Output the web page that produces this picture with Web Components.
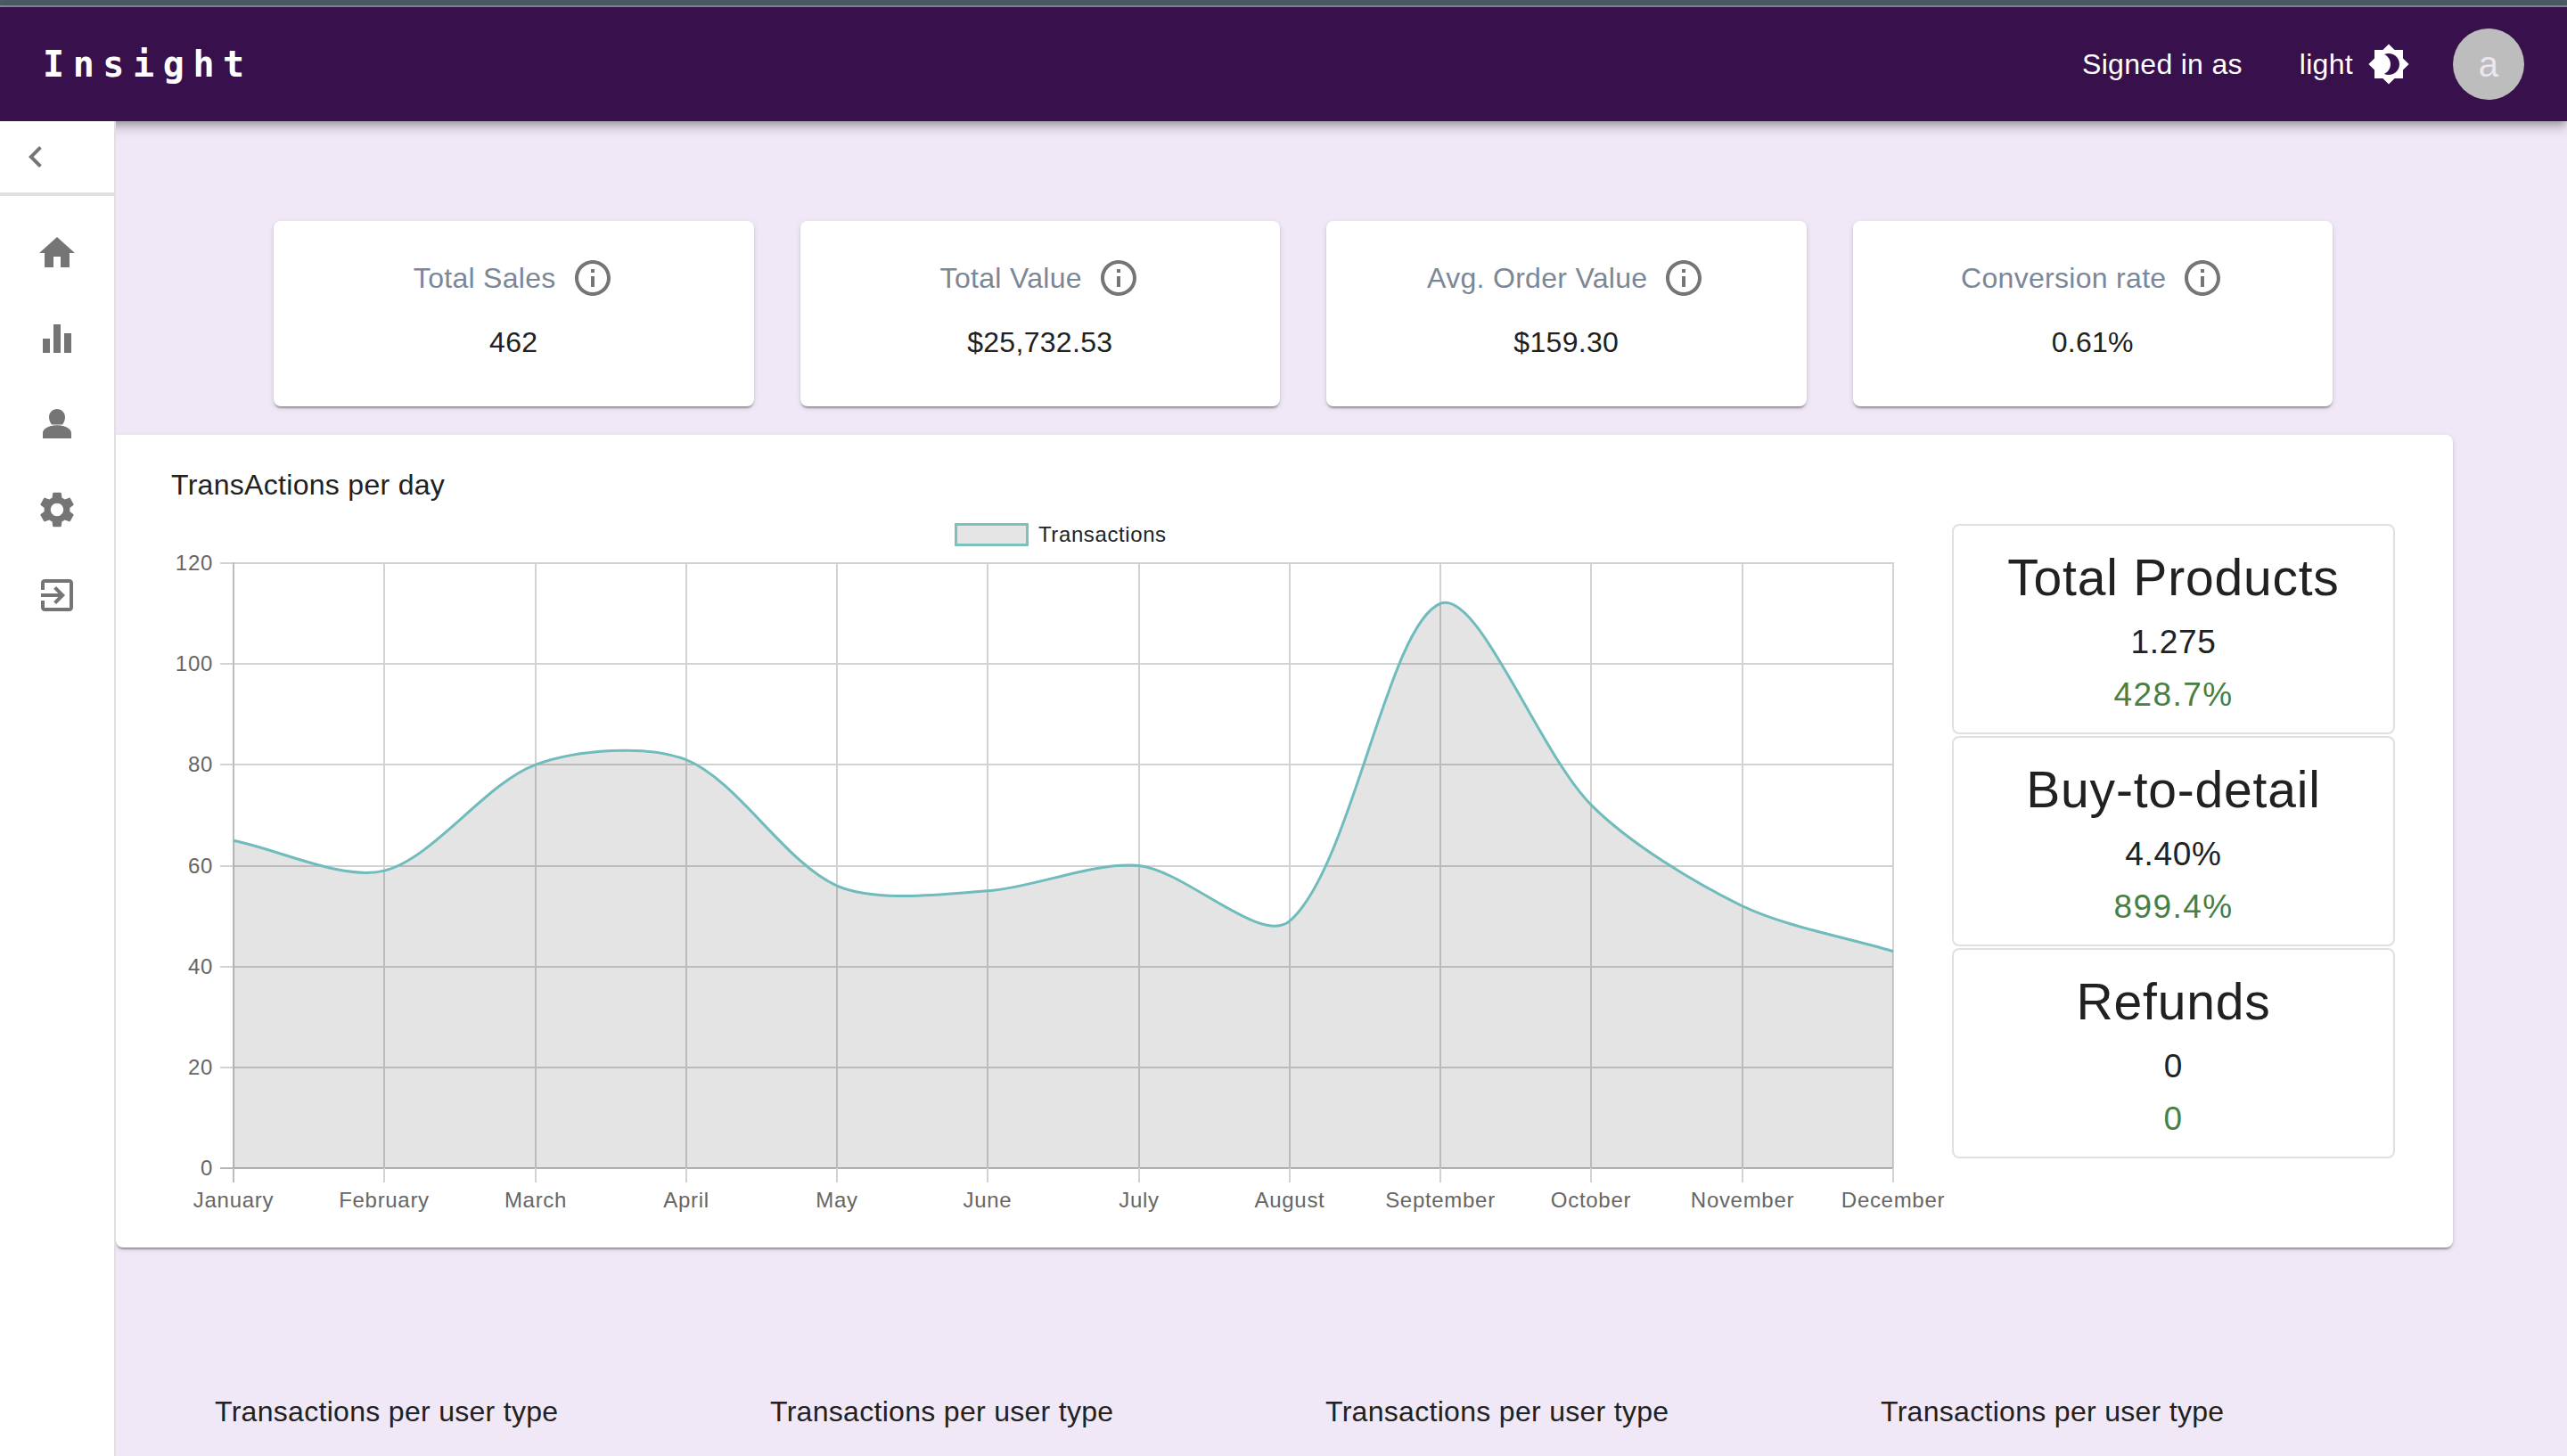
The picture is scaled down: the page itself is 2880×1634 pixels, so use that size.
<!DOCTYPE html>
<html lang="en">
<head>
<meta charset="utf-8">
<title>Insight</title>
<style>
html,body{margin:0;padding:0;height:100%;overflow:hidden;background:#f0e8f6;font-family:"Liberation Sans",Arial,sans-serif;color:#212121}
</style>
</head>
<body>
<app-shell>
  <app-bar slot="bar" brand="Insight" user="Signed in as" mode="light" initial="a"></app-bar>
  <side-nav slot="nav"></side-nav>
  <kpi-row>
    <kpi-card label="Total Sales" value="462"></kpi-card>
    <kpi-card label="Total Value" value="$25,732.53"></kpi-card>
    <kpi-card label="Avg. Order Value" value="$159.30"></kpi-card>
    <kpi-card label="Conversion rate" value="0.61%"></kpi-card>
  </kpi-row>
  <chart-panel heading="TransActions per day">
    <line-chart slot="chart"></line-chart>
    <stat-card slot="stats" label="Total Products" value="1.275" delta="428.7%"></stat-card>
    <stat-card slot="stats" label="Buy-to-detail" value="4.40%" delta="899.4%"></stat-card>
    <stat-card slot="stats" label="Refunds" value="0" delta="0"></stat-card>
  </chart-panel>
  <title-row>
    <span>Transactions per user type</span>
    <span>Transactions per user type</span>
    <span>Transactions per user type</span>
    <span>Transactions per user type</span>
  </title-row>
</app-shell>
<script>
const ICONS={
  chevron:'M15.41 7.41 14 6l-6 6 6 6 1.41-1.41L10.83 12z',
  home:'M10 20v-6h4v6h5v-8h3L12 3 2 12h3v8z',
  bars:'M4 12h4v8H4zM10 4h4v16h-4zM16 9h4v11h-4z',
  person:'M12 3.5c-2.5 0-4.5 2-4.5 4.5 0 1.5.5 3 1.5 4.2h6c1-1.2 1.5-2.7 1.5-4.2 0-2.5-2-4.5-4.5-4.5zM12 12.6c-3 0-8 1.2-8 4.4v3h16v-3c0-3.2-5-4.4-8-4.4z',
  gear:'M19.14 12.94c.04-.3.06-.61.06-.94 0-.32-.02-.64-.07-.94l2.03-1.58c.18-.14.23-.41.12-.61l-1.92-3.32c-.12-.22-.37-.29-.59-.22l-2.39.96c-.5-.38-1.03-.7-1.62-.94l-.36-2.54c-.04-.24-.24-.41-.48-.41h-3.84c-.24 0-.43.17-.47.41l-.36 2.54c-.59.24-1.13.57-1.62.94l-2.39-.96c-.22-.08-.47 0-.59.22L2.74 8.87c-.12.21-.08.47.12.61l2.03 1.58c-.05.3-.09.63-.09.94s.02.64.07.94l-2.03 1.58c-.18.14-.23.41-.12.61l1.92 3.32c.12.22.37.29.59.22l2.39-.96c.5.38 1.03.7 1.62.94l.36 2.54c.05.24.24.41.48.41h3.84c.24 0 .44-.17.47-.41l.36-2.54c.59-.24 1.13-.56 1.62-.94l2.39.96c.22.08.47 0 .59-.22l1.92-3.32c.12-.22.07-.47-.12-.61l-2.01-1.58zM12 15.6c-1.98 0-3.6-1.62-3.6-3.6s1.62-3.6 3.6-3.6 3.6 1.62 3.6 3.6-1.62 3.6-3.6 3.6z',
  exit:'M10.09 15.59 11.5 17l5-5-5-5-1.41 1.41L12.67 11H3v2h9.67l-2.58 2.59zM19 3H5c-1.11 0-2 .9-2 2v4h2V5h14v14H5v-4H3v4c0 1.1.89 2 2 2h14c1.1 0 2-.9 2-2V5c0-1.1-.9-2-2-2z',
  info:'M11 7h2v2h-2zm0 4h2v6h-2zm1-9C6.48 2 2 6.48 2 12s4.48 10 10 10 10-4.48 10-10S17.52 2 12 2zm0 18c-4.41 0-8-3.59-8-8s3.59-8 8-8 8 3.59 8 8-3.59 8-8 8z',
  theme:'M20 8.69V4h-4.69L12 .69 8.69 4H4v4.69L.69 12 4 15.31V20h4.69L12 23.31 15.31 20H20v-4.69L23.31 12 20 8.69zM12 18c-.89 0-1.74-.2-2.5-.55C11.56 16.5 13 14.42 13 12s-1.44-4.5-3.5-5.45C10.26 6.2 11.11 6 12 6c3.31 0 6 2.69 6 6s-2.69 6-6 6z'
};
const icon=(n,fill)=>`<svg width="48" height="48" viewBox="0 0 24 24" fill="${fill}" style="display:block;flex:none" aria-hidden="true"><path fill-rule="evenodd" d="${ICONS[n]}"/></svg>`;
function def(name,render){
  customElements.define(name,class extends HTMLElement{
    connectedCallback(){
      if(this.shadowRoot)return;
      this.attachShadow({mode:'open'}).innerHTML=render(this);
    }
  });
}
def('app-shell',()=>`<style>
:host{display:grid;grid-template-columns:130px 1fr;grid-template-rows:8px 128px 1fr;height:1634px;overflow:hidden}
.strip{grid-column:1/3;background:#4b5b64;border-bottom:2px solid #7f8b91;box-sizing:border-box}
.bar{grid-column:1/3;display:block;position:relative;z-index:1}
.nav{display:block;position:relative;z-index:2}
main{display:block;min-width:0;background:#f0e8f6}
</style>
<div class="strip"></div>
<div class="bar"><slot name="bar"></slot></div>
<div class="nav"><slot name="nav"></slot></div>
<main><slot></slot></main>`);
def('app-bar',h=>`<style>
:host{display:flex;align-items:center;height:128px;padding:0 48px;box-sizing:border-box;background:#38104b;color:#fff;
box-shadow:0 4px 8px -2px rgba(0,0,0,.2),0 8px 10px 0 rgba(0,0,0,.14),0 2px 20px 0 rgba(0,0,0,.12);font:32px/48px "Liberation Sans",Arial,sans-serif;letter-spacing:.3px}
.brand{font:700 40px/48px "DejaVu Sans Mono",monospace;letter-spacing:9.6px;margin-right:auto}
.mode{margin-left:64px;margin-right:16px}
.avatar{width:80px;height:80px;margin-left:48px;border-radius:50%;background:#bdbdbd;color:#ece6ee;font-size:40px;line-height:80px;text-align:center}
</style>
<span class="brand">${h.getAttribute('brand')}</span>
<span>${h.getAttribute('user')}</span>
<span class="mode">${h.getAttribute('mode')}</span>
${icon('theme','#fff')}
<span class="avatar">${h.getAttribute('initial')}</span>`);
def('side-nav',()=>`<style>
:host{display:block;height:100%;box-sizing:border-box;background:#fff;border-right:2px solid #e0e0e0}
.top{display:flex;align-items:center;height:80px;padding-left:16px;border-bottom:4px solid #e0e0e0}
ul{list-style:none;margin:0;padding:40px 0 0;display:grid;gap:48px;justify-items:center}
li{display:block;height:48px}
</style>
<div class="top">${icon('chevron','#757575')}</div>
<ul>
<li>${icon('home','#757575')}</li>
<li>${icon('bars','#757575')}</li>
<li>${icon('person','#757575')}</li>
<li>${icon('gear','#757575')}</li>
<li>${icon('exit','#757575')}</li>
</ul>`);
def('kpi-row',()=>`<style>
:host{display:grid;grid-template-columns:repeat(4,1fr);gap:52px;width:2310px;margin:112px 0 0 177px}
</style><slot></slot>`);
def('kpi-card',h=>`<style>
:host{display:block;height:208px;padding-top:40px;box-sizing:border-box;background:#fff;border-radius:8px;text-align:center;
box-shadow:0 4px 2px -2px rgba(0,0,0,.2),0 2px 2px 0 rgba(0,0,0,.14),0 2px 6px 0 rgba(0,0,0,.12);font:32px/48px "Liberation Sans",Arial,sans-serif;letter-spacing:.3px}
.head{display:flex;justify-content:center;gap:17px;color:#7b8797;letter-spacing:.3px}
.val{margin-top:24px;color:#212121}
</style>
<div class="head"><span>${h.getAttribute('label')}</span>${icon('info','#757575')}</div>
<div class="val">${h.getAttribute('value')}</div>`);
def('chart-panel',h=>`<style>
:host{display:block;width:2622px;height:912px;margin-top:32px;padding:32px 0 0 62px;box-sizing:border-box;background:#fff;border-radius:0 8px 8px 8px;
box-shadow:0 4px 2px -2px rgba(0,0,0,.2),0 2px 2px 0 rgba(0,0,0,.14),0 2px 6px 0 rgba(0,0,0,.12);font:32px/48px "Liberation Sans",Arial,sans-serif}
h2{margin:0 0 4px;font:inherit;letter-spacing:.3px;color:#212121}
.row{display:flex;align-items:flex-start}
.stats{display:grid;gap:2px;width:497px;margin-top:16px}
</style>
<h2>${h.getAttribute('heading')}</h2>
<div class="row"><slot name="chart"></slot><div class="stats"><slot name="stats"></slot></div></div>`);
def('stat-card',h=>`<style>
:host{display:block;height:236px;box-sizing:border-box;border:2px solid #e0e0e0;border-radius:8px;background:#fff;text-align:center;padding-top:25px;font-family:"Liberation Sans",Arial,sans-serif}
.t{font-size:57px;line-height:67px;letter-spacing:.8px;color:#212121}
.v{font-size:37px;line-height:58px;letter-spacing:.7px;margin-top:10px;color:#212121}
.d{font-size:37px;line-height:58px;letter-spacing:1.4px;margin-top:1px;color:#477f45}
</style>
<div class="t">${h.getAttribute('label')}</div>
<div class="v">${h.getAttribute('value')}</div>
<div class="d">${h.getAttribute('delta')}</div>`);
def('line-chart',()=>{
  const ox=192,oy=572,L=262,R=2124,T=632,B=1311;
  const vals=[65,59,80,81,56,55,60,49,112,72,52,43];
  const months=['January','February','March','April','May','June','July','August','September','October','November','December'];
  const X=i=>L+(R-L)*i/11, Y=v=>B-(B-T)*v/120;
  const pts=vals.map((v,i)=>[X(i),Y(v)]);
  const t=.3;
  const ctrl=pts.map((p,i)=>{
    const a=pts[Math.max(i-1,0)],b=pts[Math.min(i+1,pts.length-1)];
    const d1=Math.hypot(p[0]-a[0],p[1]-a[1]),d2=Math.hypot(b[0]-p[0],b[1]-p[1]);
    const s=d1+d2||1,fa=t*d1/s,fb=t*d2/s;
    return {p:[p[0]-fa*(b[0]-a[0]),p[1]-fa*(b[1]-a[1])],n:[p[0]+fb*(b[0]-a[0]),p[1]+fb*(b[1]-a[1])]};
  });
  let d=`M${pts[0][0]} ${pts[0][1]}`;
  for(let i=1;i<pts.length;i++){d+=`C${ctrl[i-1].n[0].toFixed(2)} ${ctrl[i-1].n[1].toFixed(2)} ${ctrl[i].p[0].toFixed(2)} ${ctrl[i].p[1].toFixed(2)} ${pts[i][0]} ${pts[i][1]}`;}
  let g='';
  for(let v=0;v<=120;v+=20){
    const y=Math.round(Y(v));
    g+=`<line x1="247" x2="${R+1}" y1="${y}" y2="${y}" stroke="${v===0?'#b4b4b4':'#d2d2d2'}" stroke-width="2"/>`;
    g+=`<text x="239" y="${y+8}" text-anchor="end">${v}</text>`;
  }
  months.forEach((m,i)=>{
    const x=Math.round(X(i));
    g+=`<line x1="${x}" x2="${x}" y1="${T-1}" y2="1327" stroke="${i===0?'#bdbdbd':'#d2d2d2'}" stroke-width="2"/>`;
    g+=`<text x="${x}" y="1355" text-anchor="middle">${m}</text>`;
  });
  return `<style>
:host{display:block;width:1998px;height:800px;flex:none}
svg{display:block;overflow:visible}
text{font:24px "Liberation Sans",Arial,sans-serif;letter-spacing:.7px;fill:#666}
.lg{fill:#222;letter-spacing:.6px}
</style>
<svg width="1998" height="800" viewBox="${ox} ${oy} 1998 800">
${g}
<path d="${d}L${R} ${B}L${L} ${B}Z" fill="rgba(0,0,0,.105)"/>
<path d="${d}" fill="none" stroke="#70bcbc" stroke-width="3"/>
<rect x="1072.5" y="588.5" width="80" height="23" fill="#e5e5e5" stroke="#7cc0c0" stroke-width="3"/>
<text class="lg" x="1165" y="608">Transactions</text>
</svg>`;
});
def('title-row',()=>`<style>
:host{display:grid;grid-template-columns:repeat(4,623px);margin:160px 0 0 111px;font:32px/48px "Liberation Sans",Arial,sans-serif;letter-spacing:.3px;color:#212121}
</style><slot></slot>`);
</script>
</body>
</html>
